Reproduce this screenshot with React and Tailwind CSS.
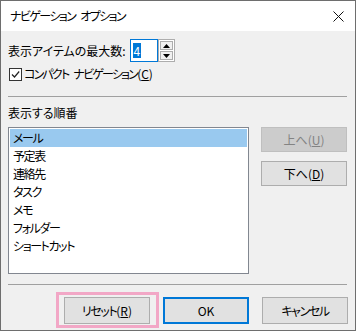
function Btn({ children, disabled, primary, className = '' }) {
    return (
        <div
            className={`flex h-[25px] w-[86px] items-center justify-center text-[12px] ${
                disabled
                    ? 'border border-[#bfbfbf] bg-[#cccccc] text-[#838383]'
                    : primary
                    ? 'border-2 border-[#0078d7] bg-[#e1e1e1] text-black'
                    : 'border border-[#adadad] bg-[#e1e1e1] text-black'
            } ${className}`}
        >
            {children}
        </div>
    );
}

const items = ['メール', '予定表', '連絡先', 'タスク', 'メモ', 'フォルダー', 'ショートカット'];

export default function App() {
    return (
        <div className="w-[356px] h-[331px] border border-[#6e6e6e] bg-[#f0f0f0] flex flex-col text-black font-['Noto_Sans_CJK_JP','Noto_Sans',sans-serif] [font-feature-settings:'palt']">
            {/* Title bar */}
            <div className="h-[30px] bg-white flex items-center justify-between pl-[9px] pr-[11px]">
                <span className="text-[12px] tracking-[-1.6px]">
                    ナビゲーション<span className="ml-[5px]">オプション</span>
                </span>
                <svg className="h-[11px] w-[11px]" viewBox="0 0 11 11" stroke="#111" strokeWidth="1">
                    <path d="M0.5 0.5l10 10M10.5 0.5l-10 10" />
                </svg>
            </div>

            <div className="flex flex-col pl-[7px] pr-[7px]">
                {/* Max items */}
                <div className="mt-[8px] flex h-[23px] items-center">
                    <span className="text-[12px]">表示アイテムの最大数:</span>
                    <div className="ml-[4px] flex h-[23px]">
                        <div className="flex h-full w-[28px] items-center border border-[#0078d7] bg-white pl-[2px]">
                            <span className="bg-[#0078d7] px-[1px] text-[12px] leading-[15px] text-white">4</span>
                        </div>
                        <div className="flex h-full w-[17px] flex-col border border-[#adadad] bg-white p-[1px]">
                            <div className="flex flex-1 items-center justify-center border border-[#adadad] bg-[#f0f0f0]">
                                <svg className="h-[4px] w-[7px]" viewBox="0 0 7 4"><path d="M3.5 0L7 4H0z" fill="#000" /></svg>
                            </div>
                            <div className="mt-[1px] flex flex-1 items-center justify-center border border-[#adadad] bg-[#f0f0f0]">
                                <svg className="h-[4px] w-[7px]" viewBox="0 0 7 4"><path d="M0 0h7L3.5 4z" fill="#000" /></svg>
                            </div>
                        </div>
                    </div>
                </div>

                {/* Compact navigation */}
                <div className="mt-[2px] flex h-[20px] items-center">
                    <div className="ml-[1px] flex h-[13px] w-[13px] items-center justify-center border border-[#333] bg-white">
                        <svg className="h-[9px] w-[9px]" viewBox="0 0 9 9" fill="none" stroke="#222" strokeWidth="1.2">
                            <path d="M1 4.5l2.5 2.5L8.2 1.5" />
                        </svg>
                    </div>
                    <span className="ml-[2px] text-[12px] tracking-[-1.8px]">
                        コンパクト<span className="ml-[5px]">ナビゲーション</span>
                        <span className="tracking-normal">(<span className="underline">C</span>)</span>
                    </span>
                </div>

                <div className="mt-[12px] h-px bg-[#a0a0a0] mr-[1px]" />

                <div className="mt-[8px] h-[16px] flex items-center text-[12px]">表示する順番</div>

                {/* List + buttons */}
                <div className="mt-[6px] flex">
                    <div className="h-[147px] w-[241px] border border-[#828790] bg-white p-px">
                        {items.map((it, i) => (
                            <div
                                key={it}
                                className={`h-[18px] flex items-center pl-[3px] text-[12px] tracking-[-1.4px] ${i === 0 ? 'bg-[#99c9ef]' : ''}`}
                            >
                                {it}
                            </div>
                        ))}
                    </div>
                    <div className="ml-[12px] flex flex-col">
                        <Btn disabled>
                            上へ(<span className="underline">U</span>)
                        </Btn>
                        <Btn className="mt-[9px]">
                            下へ(<span className="underline">D</span>)
                        </Btn>
                    </div>
                </div>

                <div className="mt-[10px] h-px bg-[#a0a0a0] mr-[1px]" />

                {/* Bottom buttons */}
                <div className="mt-[12px] flex justify-end gap-[13px]">
                    <div className="relative">
                        <div className="absolute -left-[8px] -right-[9px] -top-[5px] -bottom-[4px] border-[3px] border-[#f2a7c6]" />
                        <Btn className="h-[27px]">
                            <span className="tracking-[-1.4px]">リセット</span>(<span className="underline">R</span>)
                        </Btn>
                    </div>
                    <Btn primary className="h-[27px]">OK</Btn>
                    <Btn className="h-[27px]">
                        <span className="tracking-[-1.4px]">キャンセル</span>
                    </Btn>
                </div>
            </div>
        </div>
    );
}
